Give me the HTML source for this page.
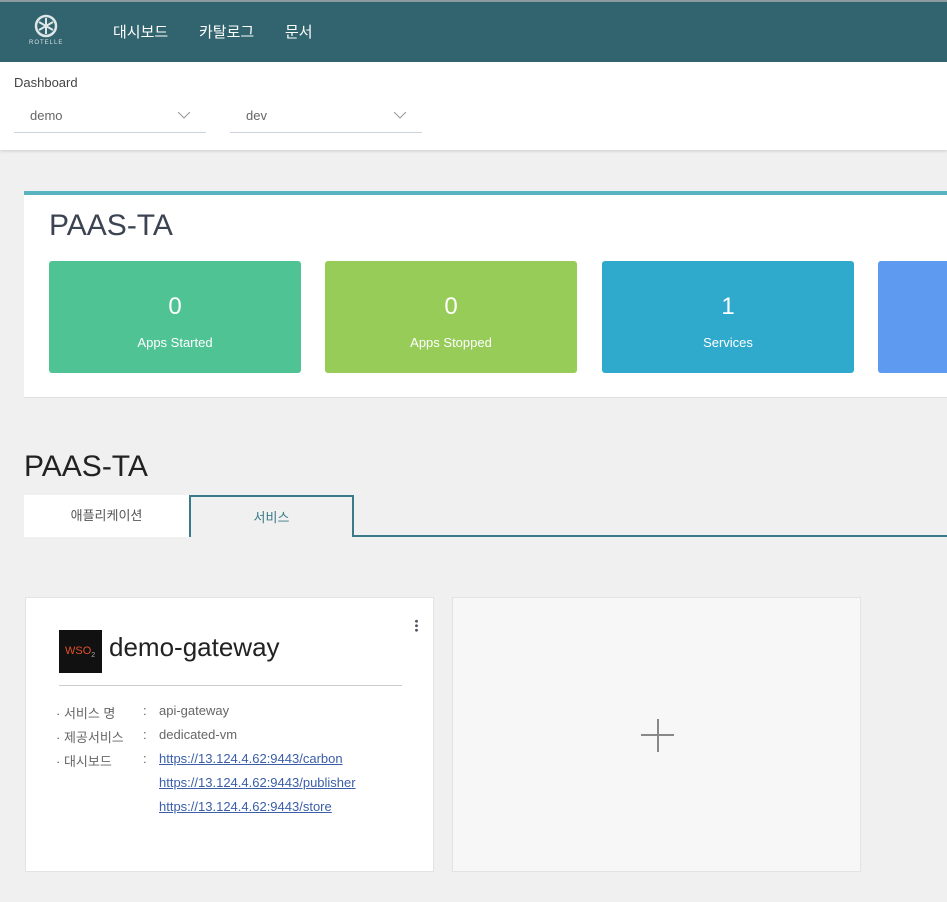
<!DOCTYPE html>
<html><head><meta charset="utf-8"><style>
*{margin:0;padding:0;box-sizing:border-box}
body{width:947px;height:902px;overflow:hidden;background:#eff0ef;font-family:"Liberation Sans","Noto Sans CJK KR",sans-serif;position:relative}
.hd{position:absolute;left:0;top:0;width:947px;height:62px;background:#31646f;border-top:2px solid #8a9a9e}
.nav{position:absolute;top:19px;color:#fff;font-size:15px}
.sub{position:absolute;left:0;top:62px;width:947px;height:88px;background:#fff;box-shadow:0 1px 3px rgba(0,0,0,.15)}
.sel{position:absolute;top:100px;width:192px;height:33px;border-bottom:1px solid #cdd3dc;font-size:13px;color:#666;padding-left:16px;line-height:32px}
.sel svg{position:absolute;right:16px;top:12px}
.card{position:absolute;left:24px;top:191px;width:940px;height:207px;background:#fff;border-top:4px solid #5ab4c0;border-bottom:1px solid #dfe1e1}
.t1{position:absolute;font-size:30px;color:#3c4452}
.tile{position:absolute;top:261px;width:252px;height:112px;border-radius:3px;color:#fff;text-align:center}
.tile b{display:block;font-size:24px;margin-top:32px;font-weight:normal}
.tile span{display:block;font-size:13px;margin-top:14px}
.tab{position:absolute;top:495px;height:42px;font-size:13px;text-align:center;line-height:42px;color:#555}
.svc{position:absolute;top:597px;width:409px;height:275px;border:1px solid #e2e4e4;background:#fff}
.row{position:absolute;left:30px;font-size:13px;color:#666}
a{color:#3b5ea8;text-decoration:underline;position:absolute;left:133px;font-size:13px}
</style></head><body>
<div class="hd">
<svg style="position:absolute;left:34px;top:12px" width="24" height="24" viewBox="0 0 24 24"><circle cx="12" cy="12" r="10" fill="none" stroke="#dfe6e8" stroke-width="2.5"/><path d="M12 4L12 20M5 8L19 16M5 16L19 8" stroke="#dfe6e8" stroke-width="2"/></svg>
<div style="position:absolute;left:29px;top:38px;font-size:6px;color:#d8e0e2;letter-spacing:1px">ROTELLE</div>
<div class="nav" style="left:113px">대시보드</div><div class="nav" style="left:199px">카탈로그</div><div class="nav" style="left:285px">문서</div>
</div>
<div class="sub"><div style="position:absolute;left:14px;top:13px;font-size:13px;color:#444">Dashboard</div></div>
<div class="sel" style="left:14px">demo<svg width="12" height="7"><path d="M0 0L6 6L12 0" fill="none" stroke="#999"/></svg></div>
<div class="sel" style="left:230px">dev<svg width="12" height="7"><path d="M0 0L6 6L12 0" fill="none" stroke="#999"/></svg></div>
<div class="card"></div>
<div class="t1" style="left:49px;top:209px">PAAS-TA</div>
<div class="tile" style="left:49px;background:#50c395"><b>0</b><span>Apps Started</span></div>
<div class="tile" style="left:325px;background:#97cc59"><b>0</b><span>Apps Stopped</span></div>
<div class="tile" style="left:602px;background:#2faacc"><b>1</b><span>Services</span></div>
<div class="tile" style="left:878px;background:#5e9aef"></div>
<div class="t1" style="left:24px;top:450px;color:#222">PAAS-TA</div>
<div style="position:absolute;left:24px;top:535px;width:923px;height:2px;background:#3b7a8a"></div>
<div class="tab" style="left:24px;width:165px;background:#fff">애플리케이션</div>
<div class="tab" style="left:189px;width:165px;background:#eff0ef;border:2px solid #3b7a8a;border-bottom:none;color:#3b7a8a">서비스</div>
<div class="svc" style="left:25px">
<div style="position:absolute;left:33px;top:32px;width:43px;height:43px;background:#111;color:#e4502a;font-size:11px;line-height:43px;padding-left:6px">WSO<sub style="color:#aaa;font-size:7px">2</sub></div>
<div style="position:absolute;left:83px;top:34px;font-size:26px;color:#222">demo-gateway</div>
<div style="position:absolute;left:389px;top:21px;width:3px;height:13px;background:radial-gradient(circle,#556 1.3px,transparent 1.6px) 0 0/3px 4.5px"></div>
<div style="position:absolute;left:33px;top:87px;width:343px;height:1px;background:#ccc"></div>
<div class="row" style="top:105px">· 서비스 명</div><div class="row" style="left:117px;top:105px">:</div><div class="row" style="left:133px;top:105px">api-gateway</div>
<div class="row" style="top:129px">· 제공서비스</div><div class="row" style="left:117px;top:129px">:</div><div class="row" style="left:133px;top:129px">dedicated-vm</div>
<div class="row" style="top:153px">· 대시보드</div><div class="row" style="left:117px;top:153px">:</div>
<a style="top:153px">https://13.124.4.62:9443/carbon</a>
<a style="top:177px">https://13.124.4.62:9443/publisher</a>
<a style="top:201px">https://13.124.4.62:9443/store</a>
</div>
<div class="svc" style="left:452px;background:#f7f7f7">
<div style="position:absolute;left:188px;top:136px;width:33px;height:2px;background:#888"></div>
<div style="position:absolute;left:204px;top:121px;width:2px;height:33px;background:#888"></div>
</div>
</body></html>
